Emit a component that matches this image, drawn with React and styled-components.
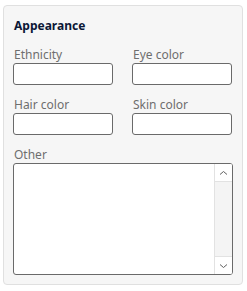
import React from "react";
import styled, { createGlobalStyle } from "styled-components";

const GlobalStyle = createGlobalStyle`
    body {
        margin: 0;
        background: #ffffff;
        font-family: "Noto Sans", "Open Sans", sans-serif;
    }
`;

const Page = styled.div`
    padding: 5px 5px 7px 3px;
`;

const Panel = styled.section`
    width: 240px;
    height: 280px;
    box-sizing: border-box;
    background: #f6f6f6;
    border: 1px solid #e0e0e0;
    border-radius: 4px;
    padding: 12px 9px 9px 9px;
    display: flex;
    flex-direction: column;
`;

const Title = styled.h3`
    margin: 0 0 13px 1px;
    font-size: 12px;
    font-weight: 700;
    line-height: 16px;
    color: #0b1736;
`;

const Grid = styled.div`
    display: grid;
    grid-template-columns: 100px 100px;
    column-gap: 19px;
    row-gap: 12px;
`;

const Field = styled.div`
    display: flex;
    flex-direction: column;
    grid-column: ${(props) => (props.wide ? "1 / span 2" : "auto")};
`;

const Label = styled.label`
    font-size: 12px;
    line-height: 16px;
    color: #6e6e6e;
    margin-left: 1px;
`;

const Input = styled.input`
    box-sizing: border-box;
    width: 100px;
    height: 22px;
    margin: 0;
    border: 1px solid #6a6a6a;
    border-radius: 3px;
    background: #ffffff;
`;

const Area = styled.div`
    box-sizing: border-box;
    width: 220px;
    height: 112px;
    border: 1px solid #6a6a6a;
    border-radius: 3px;
    background: #ffffff;
    display: flex;
    justify-content: flex-end;
    overflow: hidden;
`;

const Track = styled.div`
    width: 17px;
    background: #f4f4f4;
    border-left: 1px solid #e2e2e2;
    display: flex;
    flex-direction: column;
    justify-content: space-between;
`;

const Arrow = styled.div`
    height: 17px;
    background: #ffffff;
    display: flex;
    align-items: center;
    justify-content: center;
    border-${(props) => (props.down ? "top" : "bottom")}: 1px solid #e2e2e2;
`;

const Chevron = ({ down }) => (
    <svg width="9" height="6" viewBox="0 0 9 6">
        <path
            d={down ? "M1 1.5 L4.5 4.5 L8 1.5" : "M1 4.5 L4.5 1.5 L8 4.5"}
            fill="none"
            stroke="#606060"
            strokeWidth="1"
        />
    </svg>
);

const fields = ["Ethnicity", "Eye color", "Hair color", "Skin color"];

export default function App() {
    return (
        <Page>
            <GlobalStyle />
            <Panel>
                <Title>Appearance</Title>
                <Grid>
                    {fields.map((f) => (
                        <Field key={f}>
                            <Label>{f}</Label>
                            <Input />
                        </Field>
                    ))}
                    <Field wide>
                        <Label>Other</Label>
                        <Area>
                            <Track>
                                <Arrow>
                                    <Chevron />
                                </Arrow>
                                <Arrow down>
                                    <Chevron down />
                                </Arrow>
                            </Track>
                        </Area>
                    </Field>
                </Grid>
            </Panel>
        </Page>
    );
}
